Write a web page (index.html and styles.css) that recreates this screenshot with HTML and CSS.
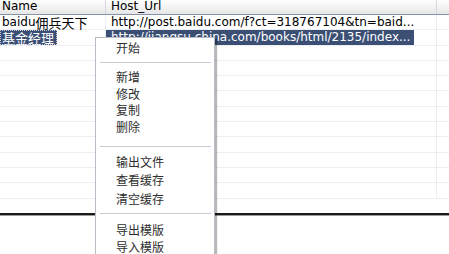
FILE: index.html
```html
<!DOCTYPE html>
<html lang="zh">
<head>
<meta charset="utf-8">
<title>Host list</title>
<link rel="stylesheet" href="styles.css">
</head>
<body>
<div class="list">
  <div class="head">
    <div class="cell c1">Name</div>
    <div class="cell c2">Host_Url</div>
    <div class="cell c3"></div>
  </div>
  <div class="row">
    <div class="cell c1"><span class="txt">baidu<span class="cjk">佣兵天下</span></span></div>
    <div class="cell c2"><span class="txt">http://post.baidu.com/f?ct=318767104&amp;tn=baid...</span></div>
    <div class="cell c3"></div>
  </div>
  <div class="row sel">
    <div class="cell c1"><span class="txt focus"><span class="cjk">基金经理</span></span></div>
    <div class="cell c2"><span class="txt">http://jiangsu.china.com/books/html/2135/index...</span></div>
    <div class="cell c3"></div>
  </div>
  <div class="row"><div class="cell c1"></div><div class="cell c2"></div><div class="cell c3"></div></div>
  <div class="row"><div class="cell c1"></div><div class="cell c2"></div><div class="cell c3"></div></div>
  <div class="row"><div class="cell c1"></div><div class="cell c2"></div><div class="cell c3"></div></div>
  <div class="row"><div class="cell c1"></div><div class="cell c2"></div><div class="cell c3"></div></div>
  <div class="row"><div class="cell c1"></div><div class="cell c2"></div><div class="cell c3"></div></div>
  <div class="row"><div class="cell c1"></div><div class="cell c2"></div><div class="cell c3"></div></div>
  <div class="row"><div class="cell c1"></div><div class="cell c2"></div><div class="cell c3"></div></div>
  <div class="row"><div class="cell c1"></div><div class="cell c2"></div><div class="cell c3"></div></div>
  <div class="row"><div class="cell c1"></div><div class="cell c2"></div><div class="cell c3"></div></div>
  <div class="row"><div class="cell c1"></div><div class="cell c2"></div><div class="cell c3"></div></div>
</div>
<div class="split"></div>

<div class="menu">
  <div class="item g1">开始</div>
  <div class="sep s1"></div>
  <div class="item g1">新增</div>
  <div class="item g1">修改</div>
  <div class="item g1">复制</div>
  <div class="item g1">删除</div>
  <div class="sep s2"></div>
  <div class="item g2">输出文件</div>
  <div class="item g2">查看缓存</div>
  <div class="item g2">清空缓存</div>
  <div class="sep s3"></div>
  <div class="item g3">导出模版</div>
  <div class="item g3">导入模版</div>
</div>
</body>
</html>
```

FILE: styles.css
```css
body{
  margin: 0;
  background: #FFFFFF;
  font-family: "DejaVu Sans", "Noto Sans CJK SC", sans-serif;
  font-size: 12px;
  color: #000;
  overflow: hidden;
}

.list{
  height: 213px;
  overflow: hidden;
}
.head{
  display: flex;
  height: 14px;
  background: linear-gradient(to bottom, #FFFFFF 0%, #F1F1F1 60%, #E6E6E6 100%);
  border-bottom: 1px solid #8592AE;
}
.head .cell{
  line-height: 13px;
  color: #000;
  border-right: 1px solid #D4D6DC;
}
.cell{
  box-sizing: border-box;
  white-space: nowrap;
}
.c1{ width: 106px; }
.c2{ width: 331px; }
.head .c1{ padding-left: 2px; }
.head .c2{ padding-left: 5px; }
.c3{ flex: 1; border-right: 0 !important; }

.row{
  display: flex;
  height: 15.3px;
  border-bottom: 1px solid #ECEEF4;
  box-sizing: border-box;
}
.row .cell{
  border-right: 1px solid #ECEEF4;
  line-height: 14px;
}
.txt{
  display: inline-block;
  vertical-align: top;
  height: 15px;
  padding: 0 3px 0 2px;
  line-height: 15px;
}
.row .c2 .txt{ padding: 0 4px 0 5px; }
.cjk{
  font-family: "Noto Sans CJK SC", sans-serif;
  font-size: 13px;
  line-height: 15px;
  vertical-align: top;
}
.sel .txt{
  background: #3B4F75;
  color: #FFFFFF;
}
.sel .focus{
  outline: 1px dotted #C9D0DC;
  outline-offset: -1px;
}

.split{
  height: 2px;
  background: #1A1A1A;
  border-bottom: 1px solid #9A9A9A;
}

.menu{
  position: absolute;
  left: 95px;
  top: 37px;
  width: 118px;
  height: 230px;
  background: #FFFFFF;
  border: 1px solid #B8BCC4;
  box-shadow: 2px 2px 1px rgba(0,0,0,0.28);
  padding-top: 1px;
  font-family: "Noto Sans CJK SC", "DejaVu Sans", sans-serif;
  font-size: 12px;
  color: #2E2E2E;
}
.item{
  padding-left: 20px;
  display: flex;
  align-items: center;
}
.g1{ height: 16.5px; }
.g2{ height: 18.5px; }
.g3{ height: 17px; }
.sep{
  margin-left: 4px;
  margin-right: 3px;
  border-top: 1px solid #C6CBD4;
}
.s1{ margin-top: 6px; margin-bottom: 6px; }
.s2{ margin-top: 11px; margin-bottom: 5.5px; }
.s3{ margin-top: 5px; margin-bottom: 7px; }
```
